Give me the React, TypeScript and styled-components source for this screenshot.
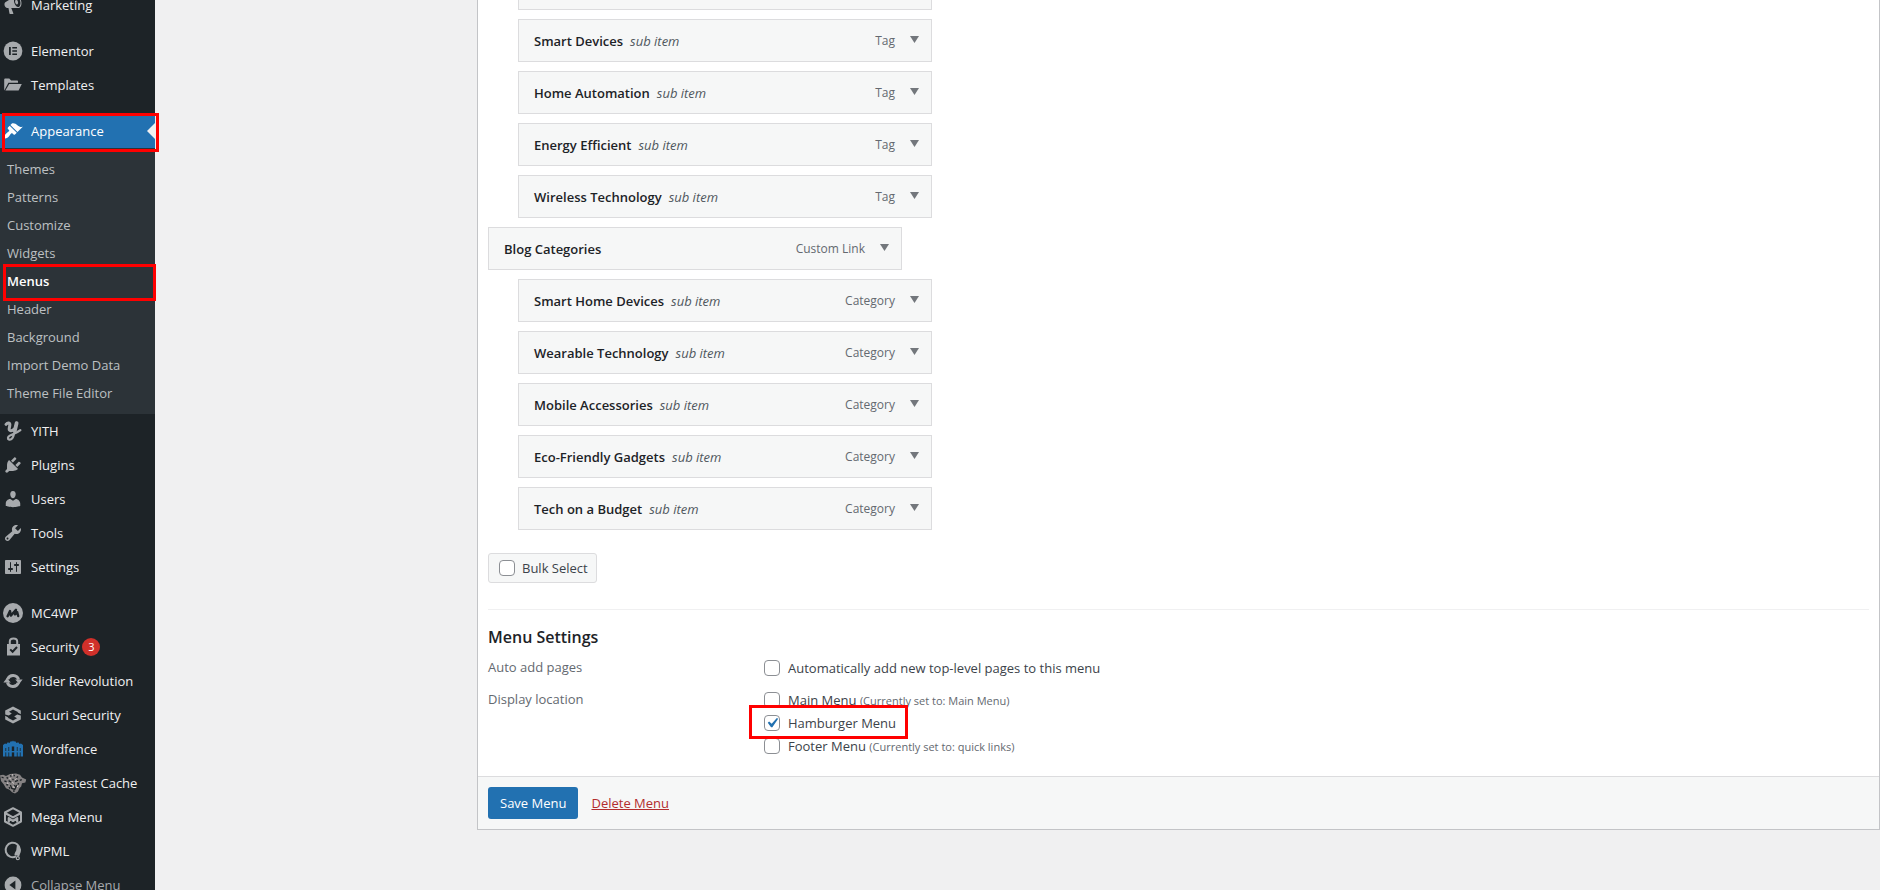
import React from "react";
import styled, { createGlobalStyle, css } from "styled-components";

const fontStack = '"Segoe UI", "Open Sans", "Noto Sans", sans-serif';

const GlobalStyle = createGlobalStyle`
  *, *::before, *::after { box-sizing: border-box; }
  body {
    margin: 0;
    background: #f0f0f1;
    color: #3c434a;
    font-family: ${fontStack};
    font-size: 13px;
  }
`;

const Page = styled.div`
  display: flex;
  height: 100vh;
  overflow: hidden;
`;

/* ---------- Admin sidebar ---------- */

const Sidebar = styled.nav`
  flex: none;
  width: 155px;
  min-height: 100vh;
  background: #1d2327;
`;

const NavList = styled.ul`
  list-style: none;
  margin: -12px 0 0;
  padding: 0;
`;

const NavItem = styled.li<{ $spaced?: boolean }>`
  position: relative;
  margin-top: ${(p) => (p.$spaced ? "12px" : "0")};
`;

const NavLink = styled.a<{ $current?: boolean; $muted?: boolean }>`
  position: relative;
  display: flex;
  align-items: center;
  gap: 8px;
  height: 34px;
  padding-left: 3px;
  color: ${(p) => (p.$muted ? "#a7aaad" : p.$current ? "#fff" : "#f0f0f1")};
  background: ${(p) => (p.$current ? "#2271b1" : "transparent")};
  font-size: 13px;
  line-height: 18px;
  text-decoration: none;
  white-space: nowrap;

  ${(p) =>
    p.$current &&
    css`
      &::after {
        content: "";
        position: absolute;
        right: 0;
        top: 9px;
        border: 8px solid transparent;
        border-right-color: #f0f0f1;
        border-left: 0;
      }
    `}
`;

const IconBox = styled.span<{ $color?: string }>`
  flex: none;
  display: flex;
  width: 20px;
  height: 20px;
  color: ${(p) => p.$color || "#a7aaad"};

  svg {
    width: 20px;
    height: 20px;
    overflow: visible;
  }
`;

const LabelText = styled.span`
  display: flex;
  align-items: center;
  gap: 3px;
`;

const Badge = styled.span`
  width: 18px;
  height: 18px;
  border-radius: 9px;
  background: #d0302a;
  color: #fff;
  font-size: 11px;
  line-height: 18px;
  text-align: center;
`;

const SubMenu = styled.ul`
  list-style: none;
  margin: 0;
  padding: 7px 0;
  background: #2c3338;
`;

const SubItem = styled.li`
  position: relative;
`;

const SubLink = styled.a<{ $current?: boolean }>`
  display: block;
  padding: 0 7px;
  color: ${(p) => (p.$current ? "#fff" : "#bdc0c3")};
  font-size: 13px;
  font-weight: ${(p) => (p.$current ? 600 : 400)};
  line-height: 28px;
  text-decoration: none;
`;

const Marker = styled.span<{ $inset: string }>`
  position: absolute;
  z-index: 2;
  inset: ${(p) => p.$inset};
  border: 3px solid #f00;
  pointer-events: none;
`;

/* ---------- Menu editor ---------- */

const Main = styled.main`
  flex: 1;
  min-width: 0;
  padding-left: 322px;
`;

const Panel = styled.form`
  border: 1px solid #c3c4c7;
  border-top: 0;
  background: #fff;
`;

const PanelBody = styled.div`
  padding: 0 10px 19px;
`;

const ItemList = styled.ul`
  display: flex;
  flex-direction: column;
  gap: 9px;
  list-style: none;
  margin: -33px 0 0;
  padding: 0;
`;

const MenuItem = styled.li<{ $depth: number }>`
  display: flex;
  align-items: center;
  width: 414px;
  height: 43px;
  margin-left: ${(p) => p.$depth * 30}px;
  padding: 0 12px 0 15px;
  border: 1px solid #dcdcde;
  background: #f6f7f7;
  line-height: 20px;
`;

const ItemTitle = styled.span`
  color: #1d2327;
  font-weight: 600;
`;

const ItemNote = styled.span`
  margin-left: 7px;
  color: #50575e;
  font-style: italic;
`;

const ItemType = styled.span`
  margin-left: auto;
  color: #646970;
  font-size: 12px;
`;

const Toggle = styled.button`
  width: 9px;
  height: 7px;
  margin: 0 0 2px 15px;
  padding: 0;
  border: 0;
  background: #73777c;
  clip-path: polygon(0 0, 100% 0, 50% 100%);
`;

const BulkSelect = styled.label`
  display: inline-flex;
  align-items: center;
  gap: 7px;
  height: 30px;
  margin-top: 23px;
  padding: 0 8px 0 10px;
  border: 1px solid #dcdcde;
  border-radius: 3px;
  background: #f6f7f7;
  vertical-align: top;
`;

const Checkbox = styled.input`
  appearance: none;
  flex: none;
  width: 16px;
  height: 16px;
  margin: 0;
  border: 1px solid #8c8f94;
  border-radius: 4px;
  background: #fff;

  &:checked {
    background: #fff
      url("data:image/svg+xml;utf8,%3Csvg xmlns='http://www.w3.org/2000/svg' viewBox='0 0 20 20'%3E%3Cpath d='M14.83 4.89l1.34.94-5.81 8.38H9.02L5.78 9.67l1.34-1.25 2.57 2.4z' fill='%232271b1'/%3E%3C/svg%3E")
      center / 20px 20px no-repeat;
  }
`;

const Settings = styled.section`
  margin-top: 26px;
  padding-top: 15px;
  border-top: 1px solid #f0f0f1;
`;

const SettingsTitle = styled.h3`
  margin: 0 0 7px;
  color: #1d2327;
  font-size: 16px;
  font-weight: 600;
  line-height: 24px;
`;

const SettingsGroup = styled.div`
  display: grid;
  grid-template-columns: 276px 1fr;

  & + & {
    margin-top: 9px;
  }
`;

const GroupName = styled.span`
  padding-top: 1px;
  color: #646970;
  line-height: 20px;
`;

const Options = styled.div`
  display: flex;
  flex-direction: column;
  align-items: flex-start;
`;

const Option = styled.label<{ $marked?: boolean }>`
  display: flex;
  align-items: center;
  gap: 8px;
  height: 23px;

  ${(p) =>
    p.$marked &&
    css`
      position: relative;
      z-index: 1;

      &::before {
        content: "";
        position: absolute;
        z-index: -1;
        inset: -6px -12px -5px -15px;
        border: 3px solid #f00;
        background: #fff;
      }
    `}
`;

const Hint = styled.span`
  color: #646970;
  font-size: 11px;
`;

const PanelFooter = styled.div`
  display: flex;
  align-items: center;
  gap: 13px;
  padding: 10px;
  border-top: 1px solid #dcdcde;
  background: #f6f7f7;
`;

const SaveButton = styled.button`
  height: 32px;
  padding: 0 12px;
  border: 0;
  border-radius: 3px;
  background: #2271b1;
  color: #fff;
  font-family: inherit;
  font-size: 13px;
`;

const DeleteLink = styled.a`
  color: #b32d2e;
  text-decoration: underline;
`;

/* ---------- Icons ---------- */

const solid = (d: string) => (
  <svg viewBox="0 0 20 20" fill="currentColor" aria-hidden="true">
    <path fillRule="evenodd" d={d} />
  </svg>
);

const icons = {
  megaphone: solid(
    "M18.15 5.94c.46 1.62.38 3.22-.02 4.48-.42 1.28-1.26 2.18-2.3 2.48-.16.06-.26.06-.4.06-.06.02-.12.02-.18.02-.06.02-.14.02-.22.02h-6.8l2.22 5.5c.02.14-.06.26-.14.34-.08.1-.24.16-.34.16H6.95c-.1 0-.26-.06-.34-.16-.08-.08-.16-.2-.14-.34l-1-5.5H4.25l-.02-.02c-.5.06-1.08-.18-1.54-.62s-.88-1.08-1.06-1.88c-.24-.8-.2-1.56-.02-2.2.18-.62.58-1.08 1.06-1.3l.02-.02 9-5.4c.1-.06.18-.1.24-.16.06-.04.14-.08.24-.12.16-.08.28-.12.5-.18 1.04-.3 2.24.1 3.22.98s1.84 2.24 2.26 3.86zm-2.58 5.98h-.02c.4-.1.74-.34 1.04-.7.58-.7.86-1.76.86-3.04 0-.64-.1-1.3-.28-1.98-.34-1.36-1.02-2.5-1.78-3.24s-1.68-1.1-2.46-.88c-.82.22-1.4.96-1.7 2-.32 1.04-.28 2.36.06 3.72.38 1.36 1 2.5 1.8 3.24.78.74 1.62 1.1 2.48.88zm-2.54-7.08c.22-.04.42-.02.62.04.38.16.76.48 1.02 1s.42 1.2.42 1.78c0 .3-.04.56-.12.8-.18.48-.44.84-.86.94-.34.1-.8-.06-1.14-.4s-.64-.86-.78-1.5c-.18-.62-.12-1.24.02-1.72s.48-.84.82-.94z"
  ),
  elementor: (
    <svg viewBox="0 0 20 20" aria-hidden="true">
      <circle cx="10" cy="10" r="9.4" fill="currentColor" />
      <path d="M6 6h1.8v8H6zM9.3 6H14v1.6H9.3zM9.3 9.2H14v1.6H9.3zM9.3 12.4H14V14H9.3z" fill="#1d2327" />
    </svg>
  ),
  folder: solid(
    "M1.2 15.6V4.4c0-.5.4-.9.9-.9h4.2l1.8 2H14c.6 0 1 .4 1 1v1.2H5.4L2.6 13zM6.2 8.9h12.6l-3.2 6.6H2.4z"
  ),
  brush: solid(
    "M14.48 11.06L7.41 3.99l1.5-1.5c.5-.56 2.3-.47 3.51.32 1.21.8 1.43 1.28 2.91 2.1 1.18.64 2.45 1.26 4.45.85zm-.71.71L6.7 4.7 4.93 6.47c-.39.39-.39 1.02 0 1.41l1.06 1.06c.39.39.39 1.03 0 1.42-.6.6-1.43 1.11-2.21 1.69-.35.26-.7.53-1.01.84C1.43 14.23.4 16.08 1.4 17.07c.99 1 2.84-.03 4.18-1.36.31-.31.58-.66.85-1.02.57-.78 1.08-1.61 1.69-2.21.39-.39 1.02-.39 1.41 0l1.06 1.06c.39.39 1.02.39 1.41 0z"
  ),
  yith: (
    <svg viewBox="0 0 20 20" fill="none" stroke="currentColor" strokeLinecap="round" strokeLinejoin="round" aria-hidden="true">
      <path d="M3 3.400C4.600 1.400 7.400 1.400 6.800 4.400L6.200 7.600c-.4 2.800 2.800 3 5 .4" strokeWidth="3" />
      <path d="M13.600 1.800L11 13c-.8 3.600-2.600 6-4.800 5.600-1.900-.4-1.600-2.800.6-4 3-1.700 6.800-2.400 10.600-5.400" strokeWidth="2.200" />
      <path d="M13.600 2.200L11.800 9.800" strokeWidth="3.800" />
    </svg>
  ),
  plug: solid(
    "M13.11 4.36L9.87 7.6 8 5.73l3.24-3.24c.35-.34 1.05-.2 1.56.32.52.51.66 1.21.31 1.55zm-8 1.77l.91-1.12 9.01 9.01-1.19.84c-.71.71-2.63 1.16-3.82 1.16H6.14L4.9 17.26c-.59.59-1.54.59-2.12 0-.59-.58-.59-1.53 0-2.12l1.24-1.24v-3.88c0-1.13.4-3.19 1.09-3.89zm7.26 3.97l3.24-3.24c.34-.35 1.04-.21 1.55.31.52.51.66 1.21.31 1.55l-3.24 3.25z"
  ),
  user: solid(
    "M10 9.25c-2.27 0-2.73-3.44-2.73-3.44C7 4.02 7.82 2 9.97 2c2.16 0 2.98 2.02 2.71 3.81 0 0-.41 3.44-2.68 3.44zm0 2.57L12.72 10c2.39 0 4.52 2.33 4.52 4.53v2.49s-3.65 1.13-7.24 1.13c-3.65 0-7.24-1.13-7.24-1.13v-2.49c0-2.25 1.94-4.48 4.47-4.48z"
  ),
  wrench: solid(
    "M16.68 9.77c-1.34 1.34-3.3 1.67-4.95.99l-5.41 6.52c-.99.99-2.59.99-3.58 0s-.99-2.59 0-3.57l6.52-5.42c-.68-1.65-.35-3.61.99-4.95 1.28-1.28 3.12-1.62 4.72-1.06l-2.89 2.89 2.82 2.82 2.86-2.87c.53 1.58.18 3.39-1.08 4.65zM3.81 16.21c.4.39 1.04.39 1.43 0 .4-.4.4-1.04 0-1.43-.39-.4-1.03-.4-1.43 0-.39.39-.39 1.03 0 1.43z"
  ),
  sliders: solid(
    "M18 16V4c0-.55-.45-1-1-1H3c-.55 0-1 .45-1 1v12c0 .55.45 1 1 1h14c.55 0 1-.45 1-1zM8 11h1c.55 0 1 .45 1 1s-.45 1-1 1H8v1.5c0 .28-.22.5-.5.5s-.5-.22-.5-.5V13H6c-.55 0-1-.45-1-1s.45-1 1-1h1V5.5c0-.28.22-.5.5-.5s.5.22.5.5V11zm5-2h-1c-.55 0-1-.45-1-1s.45-1 1-1h1V5.5c0-.28.22-.5.5-.5s.5.22.5.5V7h1c.55 0 1 .45 1 1s-.45 1-1 1h-1v5.500c0 .28-.22.5-.5.5s-.5-.22-.5-.5V9z"
  ),
  mc4wp: (
    <svg viewBox="0 0 20 20" aria-hidden="true">
      <circle cx="10" cy="10" r="10" fill="currentColor" />
      <path
        d="M4.600 13.200L7 8l.8 4.600L13 6.800l-1 4.600 2.200-2.200 1 3.800"
        fill="none"
        stroke="#1d2327"
        strokeWidth="2.400"
        strokeLinejoin="round"
        strokeLinecap="round"
      />
    </svg>
  ),
  lock: (
    <svg viewBox="0 0 20 20" aria-hidden="true">
      <path d="M6.800 8V4.600C6.800.4 14.200.4 14.200 4.600V8" fill="none" stroke="currentColor" strokeWidth="2" />
      <path d="M4 7h13v11.500H4z" fill="currentColor" />
      <path d="M7.200 12.400l2.400 2.400 4.400-4.800" fill="none" stroke="#1d2327" strokeWidth="2" />
    </svg>
  ),
  revolve: (
    <svg viewBox="0 0 20 20" aria-hidden="true">
      <path d="M4.600 8.200A5.800 5.800 0 0 1 15.600 8.600M15.400 11.800A5.800 5.800 0 0 1 4.400 11.400" fill="none" stroke="currentColor" strokeWidth="3" />
      <path d="M12.200 8.400h7.400L16.200 13zM.4 11.600h7.400L3.800 7z" fill="currentColor" />
    </svg>
  ),
  sucuri: (
    <svg viewBox="0 0 20 20" fill="currentColor" aria-hidden="true">
      <path d="M10 1.400l7.800 4.200v3.600l-3-1.600v-.6L10 4.600 6 6.800l2.800 1.800-3 1.800-3.600-1V5.600zM10 18.600l-7.800-4.200v-3.600l3 1.600v.6l4.800 2.400 4-2.200-2.800-1.800 3-1.800 3.600 1v3.800z" />
    </svg>
  ),
  wordfence: (
    <svg viewBox="0 0 20 20" fill="currentColor" aria-hidden="true">
      <path d="M0 6l2-1.600L3.400 5l1.400-1.800L6.400 4l1.600-2 1 .8L10 1.600l1 1.200 1-.8 1.600 2 1.600-.8L16.600 5l1.400-.6L20 6v11.600h-2.400V9h-.8v8.600h-2.200V8h-.8v9.600h-2.600V7.600h-2.400v10H6.200V8h-.8v9.600H3.200V9h-.8v8.600H0z" />
      <path d="M0 12h20v1.400H0z" />
    </svg>
  ),
  cheetah: (
    <svg viewBox="0 0 20 20" aria-hidden="true">
      <path
        d="M-3 2.200l3.200-.4L3 3l4-2 6-.6 4 1.400 2 2.800 4.200 2-.8 2.800-3.400.8-.8 3.200-1.800 1.800-1.400 3.200-3 2-3-1.200-2.400-2.400L3 15.200.8 11.400-2 8z"
        fill="#858283"
      />
      <path
        d="M-1.400 4l2 1M3.600 4.400l1.400 1M7.400 2.200l.8 1.600M11.400 1.800l-.4 1.600M15 3.400l-1.400 1.400M18.800 6.600l-2 .8M1.400 8l2.200.6M5.600 7.600l2.600 1.600M12 8.600l3-1.200M3.200 11.600l2 .4M7.400 12l1.400 3.400 3 1 2-4.400M6 14.200l1 1.400M16 10.400l-1.400 1M10 18l1.800.2M9.600 5.800l.8 1.400M12.600 13.600l-1.400-1.400"
        fill="none"
        stroke="#1d2327"
        strokeWidth="1.300"
      />
      <path d="M9.200 9l1.600 1.400M6.400 5.200l1.400.8M13.400 5.600l-1 1M4 9.800l1.400.8M9.800 13.800l1.800.6M15 12.600l-.6 1.400M9 1.600l1 .6" stroke="#ded8d8" strokeWidth="1" />
    </svg>
  ),
  cube: (
    <svg viewBox="0 0 20 20" fill="none" stroke="currentColor" strokeLinejoin="round" aria-hidden="true">
      <path d="M10 1.200l8 4.300v9L10 18.800l-8-4.300v-9z" strokeWidth="2" />
      <path d="M2.400 6.200L10 10.400l7.600-4.200M5.800 15.600v-4.400l4.200 2.800 4.200-2.800v4.400" strokeWidth="2.200" />
    </svg>
  ),
  wpml: (
    <svg viewBox="0 0 20 20" aria-hidden="true">
      <path d="M13 15.400A7.200 7.200 0 1 1 17 8.800c0 3.600-1.800 4-1.600 6.400" fill="none" stroke="currentColor" strokeWidth="2" />
      <path d="M14 3.400c3.400 2.600 4 8 1.400 11.200l-3.600 0c-1.200-2.400 1.800-4 1.600-6.600z" fill="currentColor" />
      <circle cx="14.800" cy="17.200" r="1.500" fill="none" stroke="currentColor" strokeWidth="1.200" />
    </svg>
  ),
  collapse: (
    <svg viewBox="0 0 20 20" aria-hidden="true">
      <circle cx="10" cy="10" r="8.400" fill="currentColor" />
      <path d="M12.400 5.400v9.200L6.400 10z" fill="#1d2327" />
    </svg>
  ),
};

/* ---------- Data ---------- */

type Entry = {
  label: string;
  icon: keyof typeof icons;
  spaced?: boolean;
  current?: boolean;
  muted?: boolean;
  color?: string;
  badge?: number;
  children?: string[];
};

const entries: Entry[] = [
  { label: "Marketing", icon: "megaphone" },
  { label: "Elementor", icon: "elementor", spaced: true },
  { label: "Templates", icon: "folder" },
  {
    label: "Appearance",
    icon: "brush",
    spaced: true,
    current: true,
    color: "#fff",
    children: [
      "Themes",
      "Patterns",
      "Customize",
      "Widgets",
      "Menus",
      "Header",
      "Background",
      "Import Demo Data",
      "Theme File Editor",
    ],
  },
  { label: "YITH", icon: "yith" },
  { label: "Plugins", icon: "plug" },
  { label: "Users", icon: "user" },
  { label: "Tools", icon: "wrench" },
  { label: "Settings", icon: "sliders" },
  { label: "MC4WP", icon: "mc4wp", spaced: true },
  { label: "Security", icon: "lock", badge: 3 },
  { label: "Slider Revolution", icon: "revolve" },
  { label: "Sucuri Security", icon: "sucuri" },
  { label: "Wordfence", icon: "wordfence", color: "#2271b1" },
  { label: "WP Fastest Cache", icon: "cheetah" },
  { label: "Mega Menu", icon: "cube" },
  { label: "WPML", icon: "wpml" },
  { label: "Collapse Menu", icon: "collapse", muted: true },
];

const menuItems = [
  { title: "", type: "", depth: 1 },
  { title: "Smart Devices", type: "Tag", depth: 1 },
  { title: "Home Automation", type: "Tag", depth: 1 },
  { title: "Energy Efficient", type: "Tag", depth: 1 },
  { title: "Wireless Technology", type: "Tag", depth: 1 },
  { title: "Blog Categories", type: "Custom Link", depth: 0 },
  { title: "Smart Home Devices", type: "Category", depth: 1 },
  { title: "Wearable Technology", type: "Category", depth: 1 },
  { title: "Mobile Accessories", type: "Category", depth: 1 },
  { title: "Eco-Friendly Gadgets", type: "Category", depth: 1 },
  { title: "Tech on a Budget", type: "Category", depth: 1 },
];

export default function App() {
  return (
    <Page>
      <GlobalStyle />
      <Sidebar aria-label="Admin menu">
        <NavList>
          {entries.map((e) => (
            <NavItem key={e.label} $spaced={e.spaced}>
              <NavLink href="#" $current={e.current} $muted={e.muted}>
                <IconBox $color={e.color}>{icons[e.icon]}</IconBox>
                <LabelText>
                  {e.label}
                  {e.badge && <Badge>{e.badge}</Badge>}
                </LabelText>
                {e.current && <Marker $inset="-1px -4px -4px 2px" />}
              </NavLink>
              {e.children && (
                <SubMenu>
                  {e.children.map((name) => (
                    <SubItem key={name}>
                      <SubLink href="#" $current={name === "Menus"}>
                        {name}
                      </SubLink>
                      {name === "Menus" && <Marker $inset="-3px -1px -6px 3px" />}
                    </SubItem>
                  ))}
                </SubMenu>
              )}
            </NavItem>
          ))}
        </NavList>
      </Sidebar>

      <Main>
        <Panel onSubmit={(ev) => ev.preventDefault()}>
          <PanelBody>
            <ItemList>
              {menuItems.map((m, i) => (
                <MenuItem key={i} $depth={m.depth}>
                  {m.title && (
                    <>
                      <ItemTitle>{m.title}</ItemTitle>
                      {m.depth > 0 && <ItemNote>sub item</ItemNote>}
                      <ItemType>{m.type}</ItemType>
                      <Toggle type="button" aria-label={`Edit ${m.title}`} />
                    </>
                  )}
                </MenuItem>
              ))}
            </ItemList>

            <BulkSelect>
              <Checkbox type="checkbox" />
              Bulk Select
            </BulkSelect>

            <Settings>
              <SettingsTitle>Menu Settings</SettingsTitle>
              <SettingsGroup role="group" aria-labelledby="auto-add">
                <GroupName id="auto-add">Auto add pages</GroupName>
                <Options>
                  <Option>
                    <Checkbox type="checkbox" />
                    Automatically add new top-level pages to this menu
                  </Option>
                </Options>
              </SettingsGroup>
              <SettingsGroup role="group" aria-labelledby="display-location">
                <GroupName id="display-location">Display location</GroupName>
                <Options>
                  <Option>
                    <Checkbox type="checkbox" />
                    <span>
                      Main Menu <Hint>(Currently set to: Main Menu)</Hint>
                    </span>
                  </Option>
                  <Option $marked>
                    <Checkbox type="checkbox" defaultChecked />
                    Hamburger Menu
                  </Option>
                  <Option>
                    <Checkbox type="checkbox" />
                    <span>
                      Footer Menu <Hint>(Currently set to: quick links)</Hint>
                    </span>
                  </Option>
                </Options>
              </SettingsGroup>
            </Settings>
          </PanelBody>
          <PanelFooter>
            <SaveButton type="submit">Save Menu</SaveButton>
            <DeleteLink href="#">Delete Menu</DeleteLink>
          </PanelFooter>
        </Panel>
      </Main>
    </Page>
  );
}
